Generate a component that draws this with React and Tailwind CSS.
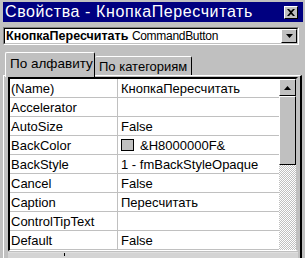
import React from 'react';

const rows = [
  { name: '(Name)', value: 'КнопкаПересчитать' },
  { name: 'Accelerator', value: '' },
  { name: 'AutoSize', value: 'False' },
  { name: 'BackColor', value: '&H8000000F&', swatch: true },
  { name: 'BackStyle', value: '1 - fmBackStyleOpaque' },
  { name: 'Cancel', value: 'False' },
  { name: 'Caption', value: 'Пересчитать' },
  { name: 'ControlTipText', value: '' },
  { name: 'Default', value: 'False' },
];

const App = () => {
  return (
    <div className="w-[305px] h-[258px] overflow-hidden bg-[#c0c0c0] pt-[2px] pl-[3px] pr-[2px] font-['Liberation_Sans',Arial,sans-serif] text-black">
      {/* title bar */}
      <div className="h-[20px] bg-[#000080] flex items-center justify-between pl-[2px] pr-[5px]">
        <span className="text-white text-[16px] leading-none tracking-[0.6px]">Свойства - КнопкаПересчитать</span>
        <div className="w-[14px] h-[13px] bg-[#c0c0c0] border-t border-l border-white border-r border-b border-r-black border-b-black flex items-center justify-center">
          <svg width="8" height="7" viewBox="0 0 8 7">
            <path d="M0 0h2l2 2 2-2h2L5 3.5 8 7H6L4 5 2 7H0l3-3.5z" fill="#000" />
          </svg>
        </div>
      </div>

      {/* object combo */}
      <div className="mt-[5px] mr-[4px] h-[18px] border border-t-[#808080] border-l-[#808080] border-r-white border-b-white">
        <div className="h-full bg-white border border-t-black border-l-black border-r-[#c0c0c0] border-b-[#c0c0c0] flex items-center">
          <div className="flex-1 pl-[1px] text-[12.5px] leading-none whitespace-nowrap">
            <span className="font-bold">КнопкаПересчитать</span>{' '}
            <span className="text-[12px] tracking-[-0.3px]">CommandButton</span>
          </div>
          <div className="w-[16px] h-full bg-[#c0c0c0] border border-t-white border-l-white border-r-black border-b-black flex items-center justify-center">
            <svg width="7" height="4" viewBox="0 0 7 4">
              <path d="M0 0h7L3.5 4z" fill="#000" />
            </svg>
          </div>
        </div>
      </div>

      {/* tabs */}
      <div className="mt-[7px] h-[23px] flex items-end pl-[2px]">
        <div className="relative z-10 w-[90px] h-[25px] mb-[-2px] bg-[#c0c0c0] border-t border-l border-white border-r border-r-black rounded-t-[2px] flex items-start pt-[4px] pl-[4px] text-[13.5px] leading-none">
          По алфавиту
        </div>
        <div className="w-[97px] h-[19px] bg-[#c0c0c0] border-t border-white border-r border-r-black rounded-t-[2px] flex items-center pl-[4px] text-[13px] leading-none">
          По категориям
        </div>
      </div>

      {/* tab panel */}
      <div className="mr-[1px] border-t border-l border-white border-r-2 border-r-black pt-[1px] pl-[4px] pr-[2px]">
        <div className="border-t-2 border-l-2 border-t-black border-l-black border-r-2 border-r-[#c0c0c0] border-b border-b-white flex bg-white">
          <div className="flex-1">
            {rows.map((r, i) => (
              <div key={i} className="h-[19px] flex border-b border-[#c0c0c0] text-[13px] leading-none">
                <div className="w-[108px] flex items-center pl-[1px] border-r border-[#c0c0c0] whitespace-nowrap">{r.name}</div>
                <div className="flex-1 flex items-center pl-[3px] whitespace-nowrap">
                  {r.swatch && <span className="w-[13px] h-[12px] bg-[#c0c0c0] border border-black mr-[6px]"></span>}
                  {r.value}
                </div>
              </div>
            ))}
          </div>
          {/* vertical scrollbar */}
          <div className="w-[17px] flex flex-col">
            <div className="h-[17px] bg-[#c0c0c0] border border-t-white border-l-white border-r-black border-b-black flex items-center justify-center">
              <svg width="7" height="4" viewBox="0 0 7 4">
                <path d="M0 4h7L3.5 0z" fill="#000" />
              </svg>
            </div>
            <div className="h-[69px] bg-[#c0c0c0] border border-t-white border-l-white border-r-black border-b-black"></div>
            <div className="flex-1 bg-[repeating-conic-gradient(#c0c0c0_0_25%,#ffffff_0_50%)] bg-[length:2px_2px]"></div>
          </div>
        </div>
        <div className="relative h-[6px] mt-[1px] border-t border-[#dfdfdf] bg-[#d4d4d4]">
          <div className="absolute left-[56px] top-0 w-[1px] h-[3px] bg-black"></div>
        </div>
      </div>
    </div>
  );
};

export default App;
